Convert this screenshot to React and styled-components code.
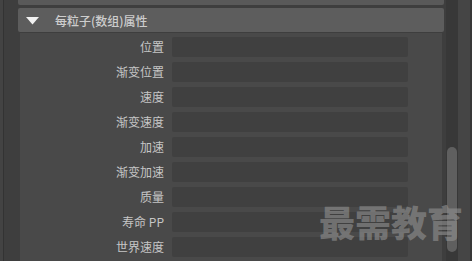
import React from 'react'
import styled, { createGlobalStyle } from 'styled-components'

const GlobalStyle = createGlobalStyle`
  html, body {
    margin: 0;
    padding: 0;
    background: #3e3e3e;
    overflow: hidden;
  }
  body {
    font-family: "Noto Sans CJK SC", "Noto Sans", sans-serif;
  }
`

const attrs = [
  '位置',
  '渐变位置',
  '速度',
  '渐变速度',
  '加速',
  '渐变加速',
  '质量',
  '寿命 PP',
  '世界速度',
]

const App = () => {
  return (
    <Window>
      <GlobalStyle />
      <Gutter>
        <span className='edge' />
        <span className='line' />
      </Gutter>
      <Main>
        <TopBar />
        <Header>
          <svg width='13' height='8' viewBox='0 0 13 8'>
            <polygon points='0,0 13,0 6.5,7.5' fill='#f2f2f2' />
          </svg>
          <span>每粒子(数组)属性</span>
        </Header>
        <Content>
          {attrs.map((label, index) => (
            <Row key={index}>
              <Label>{label}</Label>
              <Field />
            </Row>
          ))}
        </Content>
      </Main>
      <Track>
        <Thumb />
      </Track>
      <RightStrip />
      <Watermark>最需教育</Watermark>
    </Window>
  )
}

const Window = styled.div`
  position: relative;
  width: 472px;
  height: 261px;
  display: flex;
  overflow: hidden;
  background: #3e3e3e;
`

const Gutter = styled.div`
  width: 18px;
  display: flex;
  .edge {
    width: 3px;
    background: #434343;
  }
  .line {
    width: 1px;
    background: #333333;
  }
`

const Main = styled.div`
  width: 426px;
  display: flex;
  flex-direction: column;
`

const TopBar = styled.div`
  height: 5px;
  background: #595959;
  border-radius: 0 0 2px 2px;
  margin-bottom: 3px;
`

const Header = styled.div`
  height: 24px;
  background: #5d5d5d;
  border-radius: 2px;
  display: flex;
  align-items: center;
  padding-left: 8px;
  gap: 16px;
  color: #cdcdcd;
  font-size: 12px;
  font-weight: 500;
  svg {
    display: block;
    margin-top: 1px;
  }
`

const Content = styled.div`
  flex: 1;
  margin: 1px 2px 0;
  padding-top: 4px;
  background: #494949;
  display: flex;
  flex-direction: column;
  gap: 5px;
`

const Row = styled.div`
  display: grid;
  grid-template-columns: 144px 236px;
  column-gap: 8px;
  align-items: center;
  height: 20px;
`

const Label = styled.span`
  text-align: right;
  color: #c6c6c6;
  font-size: 12px;
  line-height: 20px;
`

const Field = styled.div`
  height: 20px;
  background: #404040;
  border-radius: 2px;
`

const Track = styled.div`
  width: 12px;
  margin-left: 2px;
  background: #383838;
  display: flex;
  flex-direction: column;
  align-items: center;
`

const Thumb = styled.div`
  width: 10px;
  height: 105px;
  margin-top: 147px;
  background: #5f5f5f;
  border-radius: 5px;
`

const RightStrip = styled.div`
  width: 14px;
  background: #454545;
  border-right: 2px solid #383838;
  box-sizing: border-box;
`

const Watermark = styled.div`
  position: absolute;
  left: 319px;
  top: 199px;
  color: rgba(150, 150, 150, 0.58);
  font-size: 36px;
  font-weight: 900;
  line-height: 44px;
  letter-spacing: 0;
  white-space: nowrap;
`

export default App
